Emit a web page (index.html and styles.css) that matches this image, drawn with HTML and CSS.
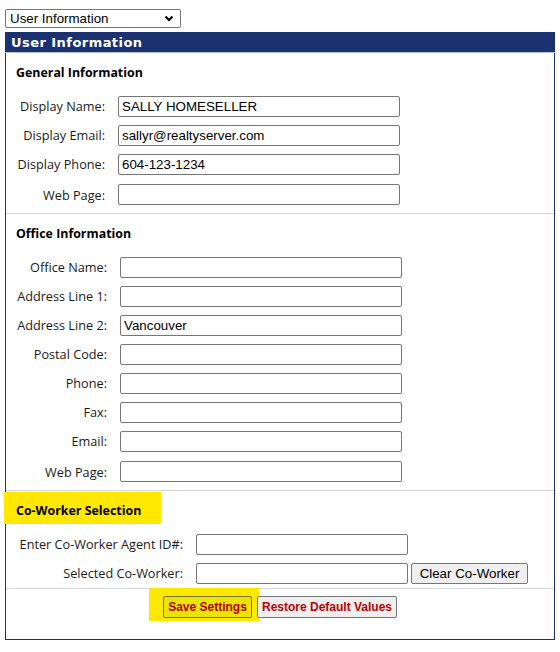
FILE: index.html
```html
<!DOCTYPE html>
<html lang="en">
<head>
<meta charset="utf-8">
<title>User Information</title>
<link rel="stylesheet" href="styles.css">
</head>
<body>
<div class="page">
  <div class="picker">
    <select class="picker-select">
      <option>User Information</option>
    </select>
    <svg class="picker-arrow" width="10" height="7" viewBox="0 0 10 7" aria-hidden="true">
      <path d="M1.5 1.5 L5 5 L8.5 1.5" fill="none" stroke="#000" stroke-width="2"/>
    </svg>
  </div>

  <div class="panel">
    <div class="panel-title">User Information</div>

    <section class="group">
      <h3 class="group-title">General Information</h3>
      <div class="fields fields-general">
        <label class="field-label">Display Name:</label>
        <input class="field-input" type="text" value="SALLY HOMESELLER">
        <label class="field-label">Display Email:</label>
        <input class="field-input" type="text" value="sallyr@realtyserver.com">
        <label class="field-label">Display Phone:</label>
        <input class="field-input" type="text" value="604-123-1234">
        <label class="field-label field-last">Web Page:</label>
        <input class="field-input field-last" type="text" value="">
      </div>
    </section>

    <section class="group">
      <h3 class="group-title">Office Information</h3>
      <div class="fields fields-office">
        <label class="field-label">Office Name:</label>
        <input class="field-input" type="text" value="">
        <label class="field-label">Address Line 1:</label>
        <input class="field-input" type="text" value="">
        <label class="field-label">Address Line 2:</label>
        <input class="field-input" type="text" value="Vancouver">
        <label class="field-label">Postal Code:</label>
        <input class="field-input" type="text" value="">
        <label class="field-label">Phone:</label>
        <input class="field-input" type="text" value="">
        <label class="field-label">Fax:</label>
        <input class="field-input" type="text" value="">
        <label class="field-label">Email:</label>
        <input class="field-input" type="text" value="">
        <label class="field-label field-last">Web Page:</label>
        <input class="field-input field-last" type="text" value="">
      </div>
    </section>

    <section class="group group-coworker">
      <h3 class="group-title marked">Co-Worker Selection</h3>
      <div class="fields fields-coworker">
        <label class="field-label">Enter Co-Worker Agent ID#:</label>
        <div class="field-line">
          <input class="field-input" type="text" value="">
        </div>
        <label class="field-label">Selected Co-Worker:</label>
        <div class="field-line">
          <input class="field-input" type="text" value="">
          <button class="plain-btn" type="button">Clear Co-Worker</button>
        </div>
      </div>
    </section>

    <div class="actions">
      <span class="save-mark">
        <button class="action-btn action-save" type="button">Save Settings</button>
      </span>
      <button class="action-btn action-restore" type="button">Restore Default Values</button>
    </div>
  </div>
</div>
</body>
</html>
```

FILE: styles.css
```css
html, body {
  margin: 0;
  padding: 0;
  background: #fff;
}

.page {
  padding: 9px 0 0 5px;
  font-family: "Open Sans", "Noto Sans", sans-serif;
  color: #1a1a1a;
}

/* page picker dropdown */
.picker {
  position: relative;
  width: 176px;
  height: 19px;
  margin-bottom: 4px;
}

.picker-select {
  -webkit-appearance: none;
  appearance: none;
  display: block;
  box-sizing: border-box;
  width: 176px;
  height: 19px;
  margin: 0;
  padding: 0 0 0 4px;
  border: 1px solid #767676;
  border-radius: 2px;
  background: #fff;
  font-family: "Liberation Sans", Arial, sans-serif;
  font-size: 13.33px;
  color: #000;
  line-height: 17px;
}

.picker-arrow {
  position: absolute;
  right: 7px;
  top: 6px;
  pointer-events: none;
}

/* main panel */
.panel {
  box-sizing: border-box;
  width: 550px;
  border: 1px solid #1c3170;
  border-top: 0;
}

.panel-title {
  height: 19px;
  margin: 0 -1px 0 -1px;
  padding: 1px 0 0 6px;
  background: #1c3170;
  border-bottom: 1px solid #b9c3d8;
  color: #fff;
  font-family: "DejaVu Sans", Verdana, sans-serif;
  font-weight: bold;
  font-size: 13px;
  line-height: 20px;
  letter-spacing: 0.45px;
}

.group {
  padding: 10px 0 7px 0;
  border-top: 1px solid #d3d6de;
}

.group:first-of-type {
  border-top: 0;
}

.group-coworker {
  padding-bottom: 4px;
}

.group-title {
  margin: 0 0 14px 10px;
  padding-top: 1px;
  font-size: 12.4px;
  line-height: 18px;
  font-weight: bold;
  color: #000;
}

/* yellow marker behind a heading */
.marked {
  position: relative;
  z-index: 0;
}

.marked::before {
  content: "";
  position: absolute;
  z-index: -1;
  left: -12px;
  top: -9px;
  width: 157px;
  height: 32px;
  background: #ffe800;
}

.fields {
  display: grid;
  row-gap: 8px;
  column-gap: 13px;
  align-items: center;
}

.fields-general {
  grid-template-columns: 99px 282px;
}

.fields-office {
  grid-template-columns: 101px 282px;
}

.fields-coworker {
  grid-template-columns: 177px auto;
}

.field-last {
  margin-top: 2px;
}

.field-label {
  text-align: right;
  font-size: 12.7px;
  line-height: 21px;
  white-space: nowrap;
}

.field-input {
  box-sizing: border-box;
  width: 282px;
  height: 21px;
  margin: 0;
  padding: 0 3px;
  border: 1px solid #767676;
  border-radius: 2px;
  background: #fff;
  font-family: "Liberation Sans", Arial, sans-serif;
  font-size: 13.33px;
  color: #000;
}

.fields-coworker .field-input {
  width: 212px;
}

.field-line {
  display: flex;
  align-items: center;
  gap: 3px;
}

.plain-btn {
  box-sizing: border-box;
  width: 117px;
  height: 21px;
  margin: 0;
  padding: 0;
  border: 1px solid #767676;
  border-radius: 2px;
  background: #efefef;
  font-family: "Liberation Sans", Arial, sans-serif;
  font-size: 13.33px;
  color: #000;
  white-space: nowrap;
}

/* bottom buttons */
.actions {
  position: relative;
  isolation: isolate;
  display: flex;
  justify-content: center;
  gap: 5px;
  padding: 7px 0 21px 0;
  border-top: 1px solid #d3d6de;
}

.save-mark {
  position: relative;
  display: inline-flex;
}

.save-mark::before {
  content: "";
  position: absolute;
  z-index: -1;
  left: -14px;
  top: -8px;
  width: 110px;
  height: 33px;
  background: #ffe800;
}

.action-btn {
  box-sizing: border-box;
  height: 22px;
  margin: 0;
  padding: 0;
  border: 1px solid #767676;
  border-radius: 2px;
  background: #efefef;
  font-family: "Liberation Sans", Arial, sans-serif;
  font-weight: bold;
  font-size: 12px;
  color: #c00000;
  white-space: nowrap;
}

.action-save {
  width: 89px;
  background: #ece300;
  border-color: #78741c;
  color: #b00000;
}

.action-restore {
  width: 140px;
}
```
